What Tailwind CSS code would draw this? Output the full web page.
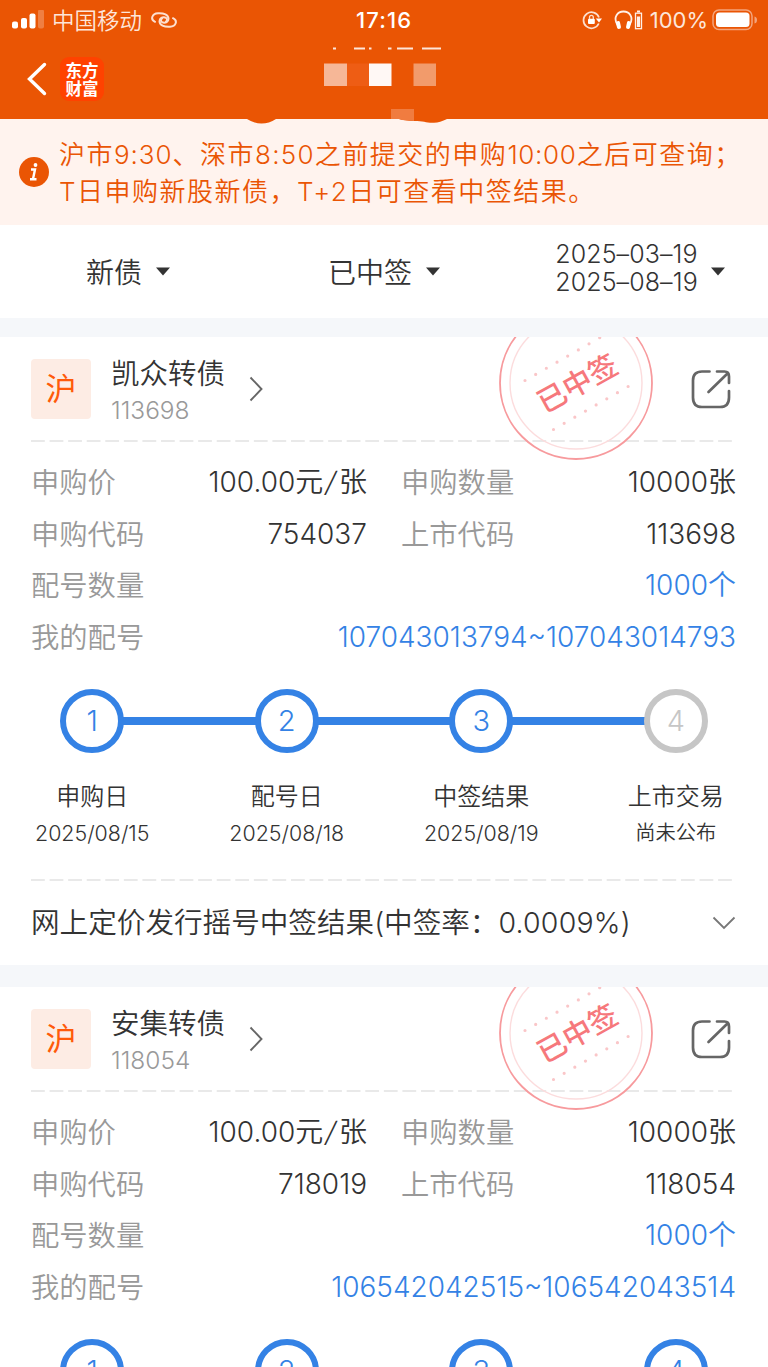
<!DOCTYPE html>
<html lang="zh-CN">
<head>
    <meta charset="UTF-8">
    <meta name="viewport" content="width=device-width, initial-scale=1.0">
    <title>申购记录</title>
    <script src="https://cdn.jsdelivr.net/npm/@tailwindcss/browser@4"></script>
</head>
<body class="bg-[#f5f7fa] font-['Inter','Noto_Sans_CJK_SC',sans-serif] font-[350] text-[#333] w-[768px] h-[1367px] overflow-hidden">
    <!-- Shared icons -->
    <svg class="hidden">
        <symbol id="stamp" viewBox="0 0 156 124">
            <circle cx="78" cy="46" r="76" fill="none" stroke="#f79a9d" stroke-width="1.8"/>
            <circle cx="78" cy="46" r="66" fill="none" stroke="#fcdcdd" stroke-width="1.4"/>
            <g stroke="#fac6c8" stroke-width="3.2" stroke-linecap="round" stroke-dasharray="0 12.3" fill="none">
                <path d="M27 43.500L102 .5"/>
                <path d="M55.500 92.500L131 49"/>
            </g>
            <text x="79" y="57.500" text-anchor="middle" transform="rotate(-29 78 46)" font-size="29" font-weight="500" fill="#f6787c">已中签</text>
        </symbol>
        <symbol id="share" viewBox="0 0 40 40">
            <path d="M18.500 2.500H11Q2 2.500 2 11.500V28.500Q2 38 11 38H29Q38 38 38 28.500V22M26 2.500H33.500Q38 2.500 38 7.500V14M17.500 23L37 4" fill="none" stroke="#666" stroke-width="2.700" stroke-linecap="round"/>
        </symbol>
        <symbol id="next" viewBox="0 0 14 26">
            <path d="M1.500 1.500L12.500 13L1.500 24.500" fill="none" stroke="#666" stroke-width="1.900"/>
        </symbol>
        <symbol id="down" viewBox="0 0 24 14">
            <path d="M1.500 1.500L12 12L22.500 1.500" fill="none" stroke="#777" stroke-width="1.800"/>
        </symbol>
        <symbol id="caret" viewBox="0 0 14 9">
            <path d="M0 .5H14L7 8.500Z" fill="#333"/>
        </symbol>
        <symbol id="dash" viewBox="0 0 703 2">
            <path d="M0 1H703" stroke="#e2e2e2" stroke-width="1.500" stroke-dasharray="13.800 4.770"/>
        </symbol>
    </svg>

    <!-- Header -->
    <header class="relative h-[119px] bg-[#ea5504] text-white">
        <div class="flex h-10 items-center pl-3 pr-[10px]">
            <svg class="w-8 h-5" viewBox="0 0 32 20" fill="#fff">
                <rect x="0" y="11.500" width="6" height="7" rx="2"/>
                <rect x="9" y="8" width="6" height="10.500" rx="2"/>
                <rect x="17.500" y="3.500" width="6" height="15" rx="2"/>
                <rect x="26" y="-.5" width="6" height="19" rx="2" opacity=".25"/>
            </svg>
            <span class="ml-2 pt-px text-[22.500px] text-[#fde6da]">中国移动</span>
            <svg class="ml-[9px] w-[26px] h-[16px]" viewBox="0 0 26 16" fill="none" stroke="#fde0d0" stroke-width="2" stroke-linecap="round">
                <path d="M4 9.800C-1 7.500 1 1.500 7 1.200C13 .8 17.500 3 17.500 6.800C17.500 10 14.500 11 12 10.500C9.500 10 9.500 7.500 11 6.500"/>
                <path d="M4 9.800C-1 7.500 1 1.500 7 1.200C13 .8 17.500 3 17.500 6.800C17.500 10 14.500 11 12 10.500C9.500 10 9.500 7.500 11 6.500" transform="rotate(180 13 8)"/>
            </svg>
            <span class="absolute left-[356px] text-[22px] font-medium tracking-[1.100px]">17:16</span>
            <svg class="ml-auto w-5 h-5" viewBox="0 0 20 20" fill="none" stroke="#fde0d0" stroke-width="1.700">
                <path d="M16.800 13.500A8 8 0 1 1 17 7.500"/>
                <path d="M13.800 8.500H20L17 12.500Z" fill="#fff" stroke="none"/>
                <rect x="6" y="8.800" width="6.800" height="5.200" rx="1" fill="#fff" stroke="none"/>
                <path d="M7.500 9V7.300a1.900 1.900 0 0 1 3.800 0V9" stroke-width="1.300"/>
            </svg>
            <svg class="ml-[12px] w-[29px] h-[20px]" viewBox="0 0 29 20" fill="none" stroke="#fff0e8">
                <path d="M3.500 15C-1.500 7 4 1.500 9.500 1.500S20.500 7 15.500 15" stroke-width="1.800"/>
                <rect x="2.500" y="11" width="4" height="8" rx="1.800" fill="#fff" stroke="none" transform="rotate(-12 4.500 15)"/>
                <rect x="12.500" y="11" width="4" height="8" rx="1.800" fill="#fff" stroke="none" transform="rotate(12 14.500 15)"/>
                <rect x="21.500" y="3.200" width="6" height="15.500" stroke-width="1.300"/>
                <path d="M23 1.500h3" stroke-width="2"/>
                <path d="M24.500 6.500V17" stroke-width="3.200"/>
            </svg>
            <span class="ml-[7px] text-[22px] font-normal text-[#fde6da] leading-none">100%</span>
            <svg class="ml-[4px] w-[46px] h-[22px]" viewBox="0 0 46 22">
                <rect x="1" y="1" width="39" height="19.500" rx="6" fill="none" stroke="#f3a47c" stroke-width="1.500"/>
                <rect x="4" y="3.500" width="33.500" height="14.500" rx="3.500" fill="#fff"/>
                <path d="M42.500 7.500Q45 8 45 11T42.500 14.500Z" fill="#f3a47c"/>
            </svg>
        </div>
        <div class="flex h-[79px] items-center pl-[27px] pb-px">
            <svg class="w-[20px] h-[34px]" viewBox="0 0 20 34">
                <path d="M17.500 2.500L2.500 17L17.500 31.500" fill="none" stroke="#fff" stroke-width="3.400" stroke-linecap="round"/>
            </svg>
            <div class="ml-[13px] flex h-11 w-11 items-center justify-center rounded-[9px] bg-[#ff4200] pt-px text-[16.500px] font-bold leading-[18px]">东方<br>财富</div>
        </div>
        <!-- Masked page title -->
        <svg class="absolute left-[240px] top-[40px] w-[220px] h-[86px]" viewBox="240 40 220 86">
            <path d="M333 48.500h3M354 48.500h11M369 48.500h2.500M388 48.500h3.500M397 48.500h16M422 48.500h19" stroke="#fde6da" stroke-width="2"/>
            <path d="M324 63.500h23v22.500h-23z" fill="#f6b797"/>
            <path d="M347 63.500h22v22.500h-22z" fill="#ee5d14"/>
            <path d="M369 63.500h22.500v22.500h-22.500z" fill="#fff8f5"/>
            <path d="M413.500 63.500h22.500v22.500h-22.500z" fill="#f29b6b"/>
            <path d="M247 119Q254 123.500 261.500 123.500T276 119ZM399 119Q404 120.500 414 121C424 121 426 123 434 122.700Q440 122.500 447 119Z" fill="#ea5504"/>
            <path d="M391 109h23v12l-12-1-3-1h-8z" fill="#f07c40"/>
        </svg>
    </header>

    <!-- Notice -->
    <section class="flex h-[106px] items-center bg-[#fff3ee] pl-[19px] text-[#ea5504]">
        <svg class="w-[30px] h-[30px]" viewBox="0 0 30 30">
            <circle cx="15" cy="15" r="15" fill="#ea5504"/>
            <path d="M12 12.500H16L14 22M11 22.200H17.500" fill="none" stroke="#fff" stroke-width="2.400"/>
            <circle cx="16.500" cy="8" r="1.900" fill="#fff"/>
        </svg>
        <div class="ml-[10px] pt-[2px] whitespace-nowrap text-[26px] leading-[37px] tracking-[1.500px]">
            <p>沪市<span class="tracking-[0.900px]">9:30</span>、深市<span class="tracking-[1.300px]">8:50</span>之前提交的申购<span class="tracking-[0.700px]">10:00</span>之后可查询；</p>
            <p>T日申购新股新债，T+2日可查看中签结果。</p>
        </div>
    </section>

    <!-- Filters -->
    <section class="flex h-[93px] items-center bg-white text-[28px]">
        <div class="flex flex-1 items-center justify-center gap-[14px]"><span class="pt-[2px]">新债</span><svg class="w-[14px] h-[9px]"><use href="#caret"/></svg></div>
        <div class="flex flex-1 items-center justify-center gap-[14px]"><span class="pt-[2px]">已中签</span><svg class="w-[14px] h-[9px]"><use href="#caret"/></svg></div>
        <div class="flex flex-1 items-center justify-center gap-[13px]">
            <div class="pb-[6px] text-[25px] leading-[27.500px] tracking-[0.100px]"><p>2025–03–19</p><p>2025–08–19</p></div>
            <svg class="w-[14px] h-[9px]"><use href="#caret"/></svg>
        </div>
    </section>

    <!-- Record: 凯众转债 -->
    <article class="relative mt-[19px] h-[628px] bg-white px-[31px]">
        <svg class="absolute left-[498px] top-0 w-[156px] h-[124px]"><use href="#stamp"/></svg>
        <div class="flex h-[103px] items-center">
            <div class="flex h-[60px] w-[60px] items-center justify-center rounded bg-[#fdece4] pt-[2px] text-[31px] font-normal text-[#ff5a0a]">沪</div>
            <div class="ml-5 pt-[4px]">
                <h2 class="text-[28.500px] leading-[38px]">凯众转债</h2>
                <p class="text-[24.500px] leading-[34px] text-[#999]">113698</p>
            </div>
            <svg class="ml-6 w-[14px] h-[26px]"><use href="#next"/></svg>
            <svg class="ml-auto mr-[6px] w-10 h-10"><use href="#share"/></svg>
        </div>
        <svg class="w-[703px] h-[2px]"><use href="#dash"/></svg>
        <dl class="mt-[15px] grid grid-cols-[112px_224px_34px_112px_223px] text-[28px] leading-[51.700px] whitespace-nowrap [&>dt]:pt-px [&>dt]:-mb-px [&>dt]:text-[28.300px] [&>dt]:text-[#999] [&>dd]:text-right">
            <dt>申购价</dt>
            <dd>100.00元<span class="inline-block -skew-x-12 px-[3px]">/</span>张</dd>
            <dt class="col-start-4">申购数量</dt>
            <dd>10000张</dd>
            <dt class="col-start-1">申购代码</dt>
            <dd>754037</dd>
            <dt class="col-start-4">上市代码</dt>
            <dd>113698</dd>
            <dt class="col-start-1">配号数量</dt>
            <dd class="col-span-4 text-[#3482e5]">1000个</dd>
            <dt>我的配号</dt>
            <dd class="col-span-4 text-[#3482e5]">107043013794~107043014793</dd>
        </dl>
        <div class="relative mt-[25px] -ml-[36px] grid w-[778px] grid-cols-4 text-center">
            <div class="absolute left-[97px] top-[28px] h-[8px] w-[584px] bg-[#3482e5]"></div>
            <div class="relative flex flex-col items-center">
                <span class="flex h-16 w-16 items-center justify-center rounded-full border-[6px] border-[#3482e5] bg-white text-[29px] font-light text-[#3482e5]">1</span>
                <p class="mt-[26px] text-[24px] leading-[36px]">申购日</p>
                <p class="text-[21.400px] leading-[36px]">2025/08/15</p>
            </div>
            <div class="relative flex flex-col items-center">
                <span class="flex h-16 w-16 items-center justify-center rounded-full border-[6px] border-[#3482e5] bg-white text-[29px] font-light text-[#3482e5]">2</span>
                <p class="mt-[26px] text-[24px] leading-[36px]">配号日</p>
                <p class="text-[21.400px] leading-[36px]">2025/08/18</p>
            </div>
            <div class="relative flex flex-col items-center">
                <span class="flex h-16 w-16 items-center justify-center rounded-full border-[6px] border-[#3482e5] bg-white text-[29px] font-light text-[#3482e5]">3</span>
                <p class="mt-[26px] text-[24px] leading-[36px]">中签结果</p>
                <p class="text-[21.400px] leading-[36px]">2025/08/19</p>
            </div>
            <div class="relative flex flex-col items-center">
                <span class="flex h-16 w-16 items-center justify-center rounded-full border-[6px] border-[#c6c6c6] bg-white text-[29px] font-light text-[#c6c6c6]">4</span>
                <p class="mt-[26px] text-[24px] leading-[36px]">上市交易</p>
                <p class="text-[20.300px] leading-[36px]">尚未公布</p>
            </div>
        </div>
        <svg class="mt-[28px] w-[703px] h-[2px]"><use href="#dash"/></svg>
        <div class="flex h-[84px] items-center justify-between text-[28.600px] whitespace-nowrap">
            <span class="pt-px">网上定价发行摇号中签结果(中签率：<span class="text-[28.500px] tracking-[0.200px]">0.0009%)</span></span>
            <svg class="mr-px w-6 h-[14px]"><use href="#down"/></svg>
        </div>
    </article>

    <!-- Record: 安集转债 -->
    <article class="relative mt-[22px] h-[380px] overflow-hidden bg-white px-[31px]">
        <svg class="absolute left-[498px] top-0 w-[156px] h-[124px]"><use href="#stamp"/></svg>
        <div class="flex h-[103px] items-center">
            <div class="flex h-[60px] w-[60px] items-center justify-center rounded bg-[#fdece4] pt-[2px] text-[31px] font-normal text-[#ff5a0a]">沪</div>
            <div class="ml-5 pt-[4px]">
                <h2 class="text-[28.500px] leading-[38px]">安集转债</h2>
                <p class="text-[24.500px] leading-[34px] text-[#999]">118054</p>
            </div>
            <svg class="ml-6 w-[14px] h-[26px]"><use href="#next"/></svg>
            <svg class="ml-auto mr-[6px] w-10 h-10"><use href="#share"/></svg>
        </div>
        <svg class="w-[703px] h-[2px]"><use href="#dash"/></svg>
        <dl class="mt-[15px] grid grid-cols-[112px_224px_34px_112px_223px] text-[28px] leading-[51.700px] whitespace-nowrap [&>dt]:pt-px [&>dt]:-mb-px [&>dt]:text-[28.300px] [&>dt]:text-[#999] [&>dd]:text-right">
            <dt>申购价</dt>
            <dd>100.00元<span class="inline-block -skew-x-12 px-[3px]">/</span>张</dd>
            <dt class="col-start-4">申购数量</dt>
            <dd>10000张</dd>
            <dt class="col-start-1">申购代码</dt>
            <dd>718019</dd>
            <dt class="col-start-4">上市代码</dt>
            <dd>118054</dd>
            <dt class="col-start-1">配号数量</dt>
            <dd class="col-span-4 text-[#3482e5]">1000个</dd>
            <dt>我的配号</dt>
            <dd class="col-span-4 text-[#3482e5]">106542042515~106542043514</dd>
        </dl>
        <div class="relative mt-[25px] -ml-[36px] grid w-[778px] grid-cols-4 text-center">
            <div class="absolute left-[97px] top-[28px] h-[8px] w-[584px] bg-[#3482e5]"></div>
            <div class="relative flex flex-col items-center">
                <span class="flex h-16 w-16 items-center justify-center rounded-full border-[6px] border-[#3482e5] bg-white text-[29px] font-light text-[#3482e5]">1</span>
            </div>
            <div class="relative flex flex-col items-center">
                <span class="flex h-16 w-16 items-center justify-center rounded-full border-[6px] border-[#3482e5] bg-white text-[29px] font-light text-[#3482e5]">2</span>
            </div>
            <div class="relative flex flex-col items-center">
                <span class="flex h-16 w-16 items-center justify-center rounded-full border-[6px] border-[#3482e5] bg-white text-[29px] font-light text-[#3482e5]">3</span>
            </div>
            <div class="relative flex flex-col items-center">
                <span class="flex h-16 w-16 items-center justify-center rounded-full border-[6px] border-[#3482e5] bg-white text-[29px] font-light text-[#3482e5]">4</span>
            </div>
        </div>
    </article>
</body>
</html>
